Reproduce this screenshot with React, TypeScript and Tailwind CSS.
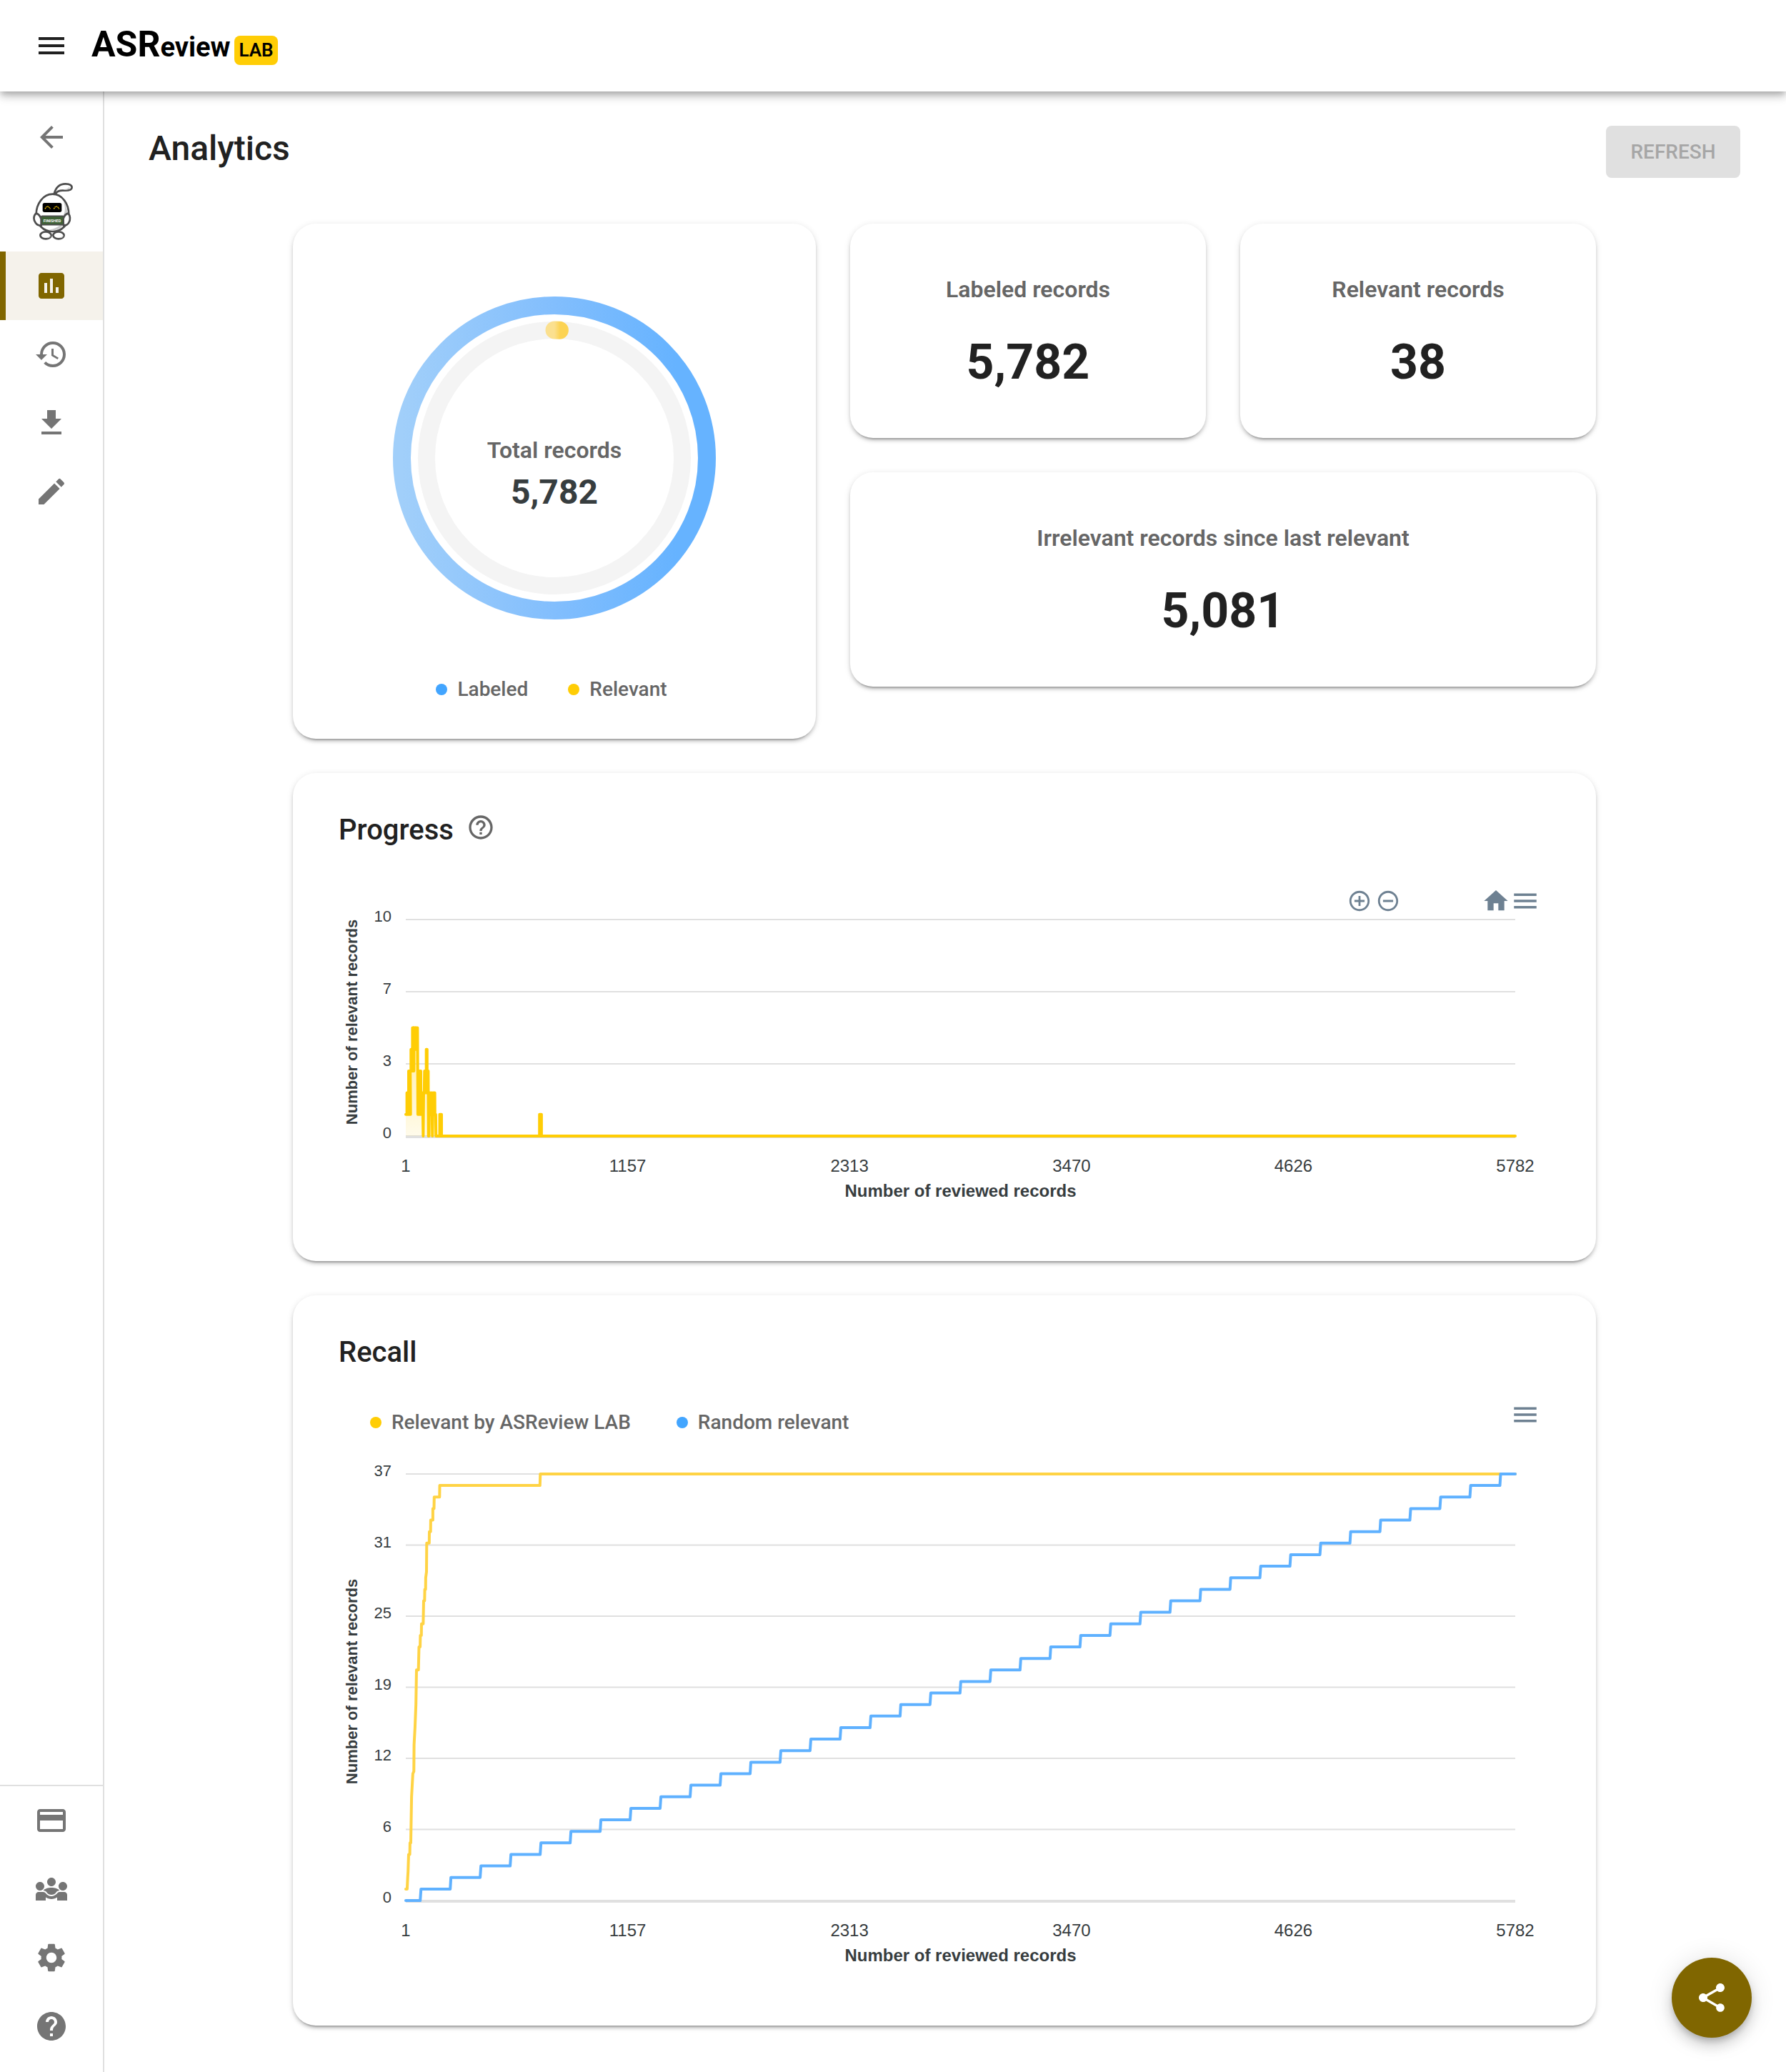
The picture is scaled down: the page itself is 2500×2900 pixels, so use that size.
import React from "react";
import {
  MdAddCircleOutline,
  MdArrowBack,
  MdAssessment,
  MdEdit,
  MdGetApp,
  MdHelp,
  MdHelpOutline,
  MdHistory,
  MdHome,
  MdMenu,
  MdPayment,
  MdRemoveCircleOutline,
  MdSettings,
  MdShare,
} from "react-icons/md";

type Point = [number, number];

const TOTAL_RECORDS = 5782;
const PLOT_LEFT = 94;
const PLOT_RIGHT = 1647;
const X_TICKS = [1, 1157, 2313, 3470, 4626, 5782];

const recordX = (n: number) =>
  PLOT_LEFT + ((n - 1) * (PLOT_RIGHT - PLOT_LEFT)) / (TOTAL_RECORDS - 1);

const toPath = (points: Point[], top: number, bottom: number, max: number) =>
  points
    .map(([n, v], i) => {
      const y = bottom - (v * (bottom - top)) / max;
      return `${i === 0 ? "M" : "L"}${recordX(n).toFixed(1)} ${y.toFixed(1)}`;
    })
    .join("");

const progressPoints: Point[] = [
  [1, 1], [7, 1], [7, 2], [11, 2], [11, 1], [16, 1], [16, 3], [20, 3], [20, 1], [26, 1],
  [24, 3], [28, 3], [28, 4], [31, 3], [36, 3], [36, 5], [41, 5], [41, 3], [43, 3], [43, 5],
  [50, 5], [51, 4], [53, 4], [54, 5], [62, 5], [63, 3], [64, 1], [68, 1], [67, 3], [73, 3],
  [73, 1], [77, 1], [77, 3], [79, 3], [80, 1], [85, 1], [85, 2], [88, 2], [90, 1], [92, 0],
  [94, 2], [97, 2], [99, 3], [102, 3], [102, 2], [108, 2], [108, 4], [112, 4], [112, 2],
  [116, 2], [116, 3], [118, 3], [119, 0], [122, 0], [124, 2], [128, 2], [128, 1], [133, 1],
  [133, 2], [137, 2], [138, 1], [140, 0], [144, 2], [146, 1], [150, 1], [150, 2], [152, 2],
  [153, 1], [157, 1], [158, 0], [178, 0], [178, 1], [187, 1], [187, 0], [698, 0], [698, 1],
  [708, 1], [708, 0], [5782, 0],
];

const recallPoints: Point[] = [
  [1, 1], [8, 1], [11, 2], [13, 2.5], [16, 4], [22, 4], [23, 5], [27, 5], [31, 9], [38, 11],
  [43, 11.2], [44, 13.5], [49, 15], [54, 17], [57, 20], [67, 20], [70, 22], [76, 22],
  [77, 23], [82, 23], [83, 24], [92, 24], [94, 26], [99, 26], [100, 27], [104, 27],
  [105, 28], [109, 28.5], [110, 31], [123, 31], [124, 32], [130, 32], [131, 33], [142, 33],
  [142, 34], [148, 34], [149, 35], [177, 35], [178, 36], [700, 36], [702, 37], [5782, 37],
];

const randomPoints: Point[] = [[1, 0]];
for (let k = 0; k < 37; k++) {
  const n = (TOTAL_RECORDS / 37) * (k + 0.5);
  randomPoints.push([n - 2, k], [n + 2, k + 1]);
}
randomPoints.push([TOTAL_RECORDS, 37]);

function Card({ className, children }: { className: string; children: React.ReactNode }) {
  return (
    <section
      className={`rounded-[32px] bg-white shadow-[0_6px_2px_-4px_rgba(0,0,0,0.2),0_4px_4px_0_rgba(0,0,0,0.14),0_2px_10px_0_rgba(0,0,0,0.12)] ${className}`}
    >
      {children}
    </section>
  );
}

function Stat({ label, value, className }: { label: string; value: string; className: string }) {
  return (
    <Card className={`flex flex-col items-center gap-[38px] pt-[68px] pb-[66px] ${className}`}>
      <h2 className="text-[32px] leading-[48px] font-semibold text-[#666666]">{label}</h2>
      <p className="text-[68px] leading-[80px] font-bold">{value}</p>
    </Card>
  );
}

function Legend({ items, className }: { items: { label: string; dot: string }[]; className: string }) {
  return (
    <ul className={`flex ${className}`}>
      {items.map((item) => (
        <li key={item.label} className="flex items-center gap-3.5">
          <span className={`size-4 rounded-full ${item.dot}`} />
          <span className="text-[28px] leading-8 font-medium text-[#666666]">{item.label}</span>
        </li>
      ))}
    </ul>
  );
}

function ChartFrame({
  top,
  bottom,
  height,
  labels,
  children,
}: {
  top: number;
  bottom: number;
  height: number;
  labels: string[];
  children: React.ReactNode;
}) {
  const step = (bottom - top) / (labels.length - 1);
  const middle = (top + bottom) / 2;
  return (
    <svg
      viewBox={`0 0 1696 ${height}`}
      className="block w-full overflow-visible font-['Liberation_Sans',Arial,sans-serif]"
    >
      {labels.map((label, i) => (
        <g key={label}>
          <line
            x1={PLOT_LEFT}
            x2={PLOT_RIGHT}
            y1={top + i * step}
            y2={top + i * step}
            stroke="#e0e0e0"
            strokeWidth="2"
          />
          <text x="74" y={top + i * step + 3} textAnchor="end" fontSize="22" fill="#373d3f">
            {label}
          </text>
        </g>
      ))}
      <line x1={PLOT_LEFT} x2={PLOT_RIGHT} y1={bottom + 2} y2={bottom + 2} stroke="#e0e0e0" strokeWidth="2" />
      {children}
      {X_TICKS.map((tick) => (
        <text key={tick} x={recordX(tick)} y={bottom + 50} textAnchor="middle" fontSize="24" fill="#373d3f">
          {tick}
        </text>
      ))}
      <text
        x={(PLOT_LEFT + PLOT_RIGHT) / 2}
        y={bottom + 85}
        textAnchor="middle"
        fontSize="24"
        fontWeight="bold"
        fill="#373d3f"
      >
        Number of reviewed records
      </text>
      <text
        transform={`translate(26 ${middle - 8}) rotate(-90)`}
        textAnchor="middle"
        fontSize="22"
        fontWeight="bold"
        fill="#373d3f"
      >
        Number of relevant records
      </text>
    </svg>
  );
}

function Mascot() {
  return (
    <svg viewBox="135 768 168 240" className="h-20 w-14" aria-hidden="true">
      <g stroke="#4d4d4d" strokeWidth="8" strokeLinejoin="round">
        <path d="M224 814C232 784 250 772 272 772C290 772 299 779 299 788C298 799 284 801 264 800C246 799 236 803 230 814" fill="#fff" />
        <path d="M286 786c-4 8-16 9-26 10c14 2 30 0 30-8z" fill="#ccc" stroke="none" />
        <path d="M218 815C258 815 286 856 286 900C286 944 256 972 218 972C180 972 149 944 149 900C149 856 178 815 218 815Z" fill="#fff" />
        <path d="M262 842C280 866 284 898 280 922L262 905C274 886 270 860 262 842Z" fill="#ccc" stroke="none" />
        <path d="M262 944C248 964 226 970 200 966C228 960 244 950 250 944Z" fill="#ccc" stroke="none" />
        <path d="M149 896C138 904 136 922 146 935C152 944 160 947 170 947L170 920C166 908 158 898 149 896Z" fill="#fff" />
        <path d="M283 896C292 904 294 922 286 935C281 944 274 947 264 947L262 920C266 908 274 898 283 896Z" fill="#fff" />
        <ellipse cx="189" cy="988" rx="23" ry="15" fill="#fff" />
        <ellipse cx="243" cy="988" rx="23" ry="15" fill="#fff" />
      </g>
      <path d="M194 1000c10 0 16-6 16-14l-6 8zM248 1000c10 0 16-6 16-14l-6 8z" fill="#ccc" />
      <rect x="176" y="852" width="80" height="39" rx="8" fill="#000" />
      <path d="M186 877q11-20 22 0M223 877q11-20 22 0" fill="none" stroke="#ffcd05" strokeWidth="4" strokeDasharray="5 2" />
      <rect x="170" y="907" width="94" height="37" rx="4" fill="#3f6136" stroke="#4d4d4d" strokeWidth="5" />
      <text x="216" y="932" textAnchor="middle" fontSize="17" fontWeight="bold" fill="#fff" className="font-['Roboto',sans-serif]">
        FINISHED
      </text>
    </svg>
  );
}

function TeamIcon() {
  return (
    <svg viewBox="0 0 24 24" fill="currentColor" className="size-12">
      <path d="M6.32 13.01c.96.02 1.85.5 2.45 1.34C9.5 15.38 10.71 16 12 16s2.5-.62 3.23-1.66c.6-.84 1.49-1.32 2.45-1.34C16.96 11.78 14.08 11 12 11c-2.07 0-4.96.78-5.68 2.01zM4 13c1.66 0 3-1.34 3-3S5.66 7 4 7s-3 1.34-3 3 1.34 3 3 3zM20 13c1.66 0 3-1.34 3-3s-1.34-3-3-3-3 1.34-3 3 1.34 3 3 3zM12 10c1.66 0 3-1.34 3-3s-1.34-3-3-3-3 1.34-3 3 1.34 3 3 3z" />
      <path d="M21 14h-3.27c-.77 0-1.35.45-1.68.92-.04.06-1.36 2.08-4.05 2.08-1.43 0-3.03-.64-4.05-2.08C7.56 14.37 6.95 14 6.27 14H3c-1.1 0-2 .9-2 2v4h7v-2.26c1.15.8 2.54 1.26 4 1.26s2.85-.46 4-1.26V20h7v-4c0-1.1-.9-2-2-2z" />
    </svg>
  );
}

function NavItem({ label, active, children }: { label: string; active?: boolean; children: React.ReactNode }) {
  return (
    <a
      href="#"
      aria-label={label}
      aria-current={active ? "page" : undefined}
      className={
        active
          ? "flex h-24 items-center justify-center border-l-8 border-[#806600] bg-[#f5f2eb] pr-2 text-[#806600]"
          : "flex h-24 items-center justify-center text-[#757575]"
      }
    >
      {children}
    </a>
  );
}

function RadialChart() {
  return (
    <svg viewBox="0 0 452 452" className="block w-[452px] max-w-full">
      <defs>
        <linearGradient id="labeled">
          <stop offset="0" stopColor="#a1cffa" />
          <stop offset="0.5" stopColor="#82befd" />
          <stop offset="0.9" stopColor="#66b3ff" />
        </linearGradient>
        <linearGradient id="relevant" gradientUnits="userSpaceOnUse" x1="226" y1="0" x2="234" y2="0">
          <stop offset="0" stopColor="#fbe08f" />
          <stop offset="1" stopColor="#fcd353" />
        </linearGradient>
      </defs>
      <circle cx="226" cy="226" r="213.5" fill="none" stroke="url(#labeled)" strokeWidth="25" />
      <circle cx="226" cy="226" r="179" fill="none" stroke="#f4f4f4" strokeWidth="24" />
      <path d="M226 47A179 179 0 0 1 233.400 47.200" fill="none" stroke="url(#relevant)" strokeWidth="25" strokeLinecap="round" />
      <text x="226" y="226" textAnchor="middle" fontSize="32" className="font-semibold" fill="#666666">
        Total records
      </text>
      <text x="226" y="290" textAnchor="middle" fontSize="48" fontWeight="bold" fill="#373d3f">
        5,782
      </text>
    </svg>
  );
}

export default function App() {
  return (
    <div className="flex min-h-screen flex-col bg-white font-['Roboto',sans-serif] text-[#212121]">
      <header className="z-10 flex h-32 items-center bg-white pl-12 shadow-[0_4px_8px_-2px_rgba(0,0,0,0.2),0_8px_10px_0_rgba(0,0,0,0.14),0_2px_20px_0_rgba(0,0,0,0.12)]">
        <button type="button" aria-label="Menu">
          <MdMenu className="size-12" />
        </button>
        <a href="#" className="ml-8 flex items-baseline text-black">
          <span className="text-[50px] leading-[56px] font-bold">ASR</span>
          <span className="text-[38px] leading-[56px] font-bold">eview</span>
          <span className="ml-1.5 rounded-lg bg-[#ffcd05] px-1.5 text-[26px] leading-[41px] font-semibold">LAB</span>
        </a>
      </header>

      <div className="flex grow">
        <aside className="flex w-36 shrink-0 flex-col justify-between py-4 shadow-[2px_0_0_#e0e0e0]">
          <nav aria-label="Project">
            <NavItem label="Back">
              <MdArrowBack className="size-12" />
            </NavItem>
            <div className="flex h-28 items-center justify-center pl-1">
              <Mascot />
            </div>
            <NavItem label="Analytics" active>
              <MdAssessment className="size-12" />
            </NavItem>
            <NavItem label="History">
              <MdHistory className="size-12" />
            </NavItem>
            <NavItem label="Export">
              <MdGetApp className="size-12" />
            </NavItem>
            <NavItem label="Details">
              <MdEdit className="size-12" />
            </NavItem>
          </nav>
          <nav aria-label="General" className="border-t-2 border-[#e0e0e0]">
            <NavItem label="Donate">
              <MdPayment className="size-12" />
            </NavItem>
            <NavItem label="Community">
              <TeamIcon />
            </NavItem>
            <NavItem label="Settings">
              <MdSettings className="size-12" />
            </NavItem>
            <NavItem label="Help">
              <MdHelp className="size-12" />
            </NavItem>
          </nav>
        </aside>

        <main className="min-w-0 grow px-16 pt-12 pb-16">
          <div className="flex items-start justify-between">
            <h1 className="text-[48px] leading-[64px] font-medium">Analytics</h1>
            <button
              type="button"
              disabled
              className="min-w-[188px] rounded-lg bg-[#e0e0e0] px-8 py-3 text-[28px] leading-[49px] font-medium text-[#a6a6a6]"
            >
              REFRESH
            </button>
          </div>

          <div className="mx-auto mt-16 grid max-w-[1824px] grid-cols-12 gap-12">
            <Card className="col-span-5 flex flex-col items-center pt-[102px] pb-[53px]">
              <RadialChart />
              <Legend
                className="mt-[82px] gap-14 pr-2"
                items={[
                  { label: "Labeled", dot: "bg-[#42a5ff]" },
                  { label: "Relevant", dot: "bg-[#ffcd05]" },
                ]}
              />
            </Card>

            <div className="col-span-7 grid grid-cols-2 content-start gap-12">
              <Stat className="col-span-1" label="Labeled records" value="5,782" />
              <Stat className="col-span-1" label="Relevant records" value="38" />
              <Stat className="col-span-2" label="Irrelevant records since last relevant" value="5,081" />
            </div>

            <Card className="col-span-12 px-16 pt-14 pb-16">
              <div className="flex h-12 items-start gap-[18px]">
                <h2 className="text-[40px] leading-[48px] font-medium">Progress</h2>
                <button type="button" aria-label="About this chart" className="text-[#666666]">
                  <MdHelpOutline className="size-10" />
                </button>
              </div>
              <div className="mt-[54px] flex h-[42px] items-center justify-end pr-3.5 text-[#6e8192]">
                <button type="button" aria-label="Zoom in">
                  <MdAddCircleOutline className="size-[34px]" />
                </button>
                <button type="button" aria-label="Zoom out" className="ml-1.5">
                  <MdRemoveCircleOutline className="size-[34px]" />
                </button>
                <button type="button" aria-label="Reset zoom" className="ml-[114px]">
                  <MdHome className="size-10" />
                </button>
                <button type="button" aria-label="Chart menu">
                  <MdMenu className="size-[42px]" />
                </button>
              </div>
              <ChartFrame top={5} bottom={308} height={419} labels={["10", "7", "3", "0"]}>
                <defs>
                  <linearGradient id="progress-area" x1="0" y1="0" x2="0" y2="1">
                    <stop offset="0" stopColor="#ffcd05" stopOpacity="0.4" />
                    <stop offset="1" stopColor="#ffcd05" stopOpacity="0.08" />
                  </linearGradient>
                </defs>
                <path d={`${toPath(progressPoints, 5, 308, 10)}L${PLOT_LEFT} 308Z`} fill="url(#progress-area)" />
                <path
                  d={toPath(progressPoints, 5, 308, 10)}
                  fill="none"
                  stroke="#ffcd05"
                  strokeWidth="4"
                  strokeLinecap="round"
                  strokeLinejoin="round"
                />
              </ChartFrame>
            </Card>

            <Card className="col-span-12 px-16 pt-14 pb-16">
              <h2 className="text-[40px] leading-[48px] font-medium">Recall</h2>
              <div className="mt-[42px] flex h-10 items-start justify-between pr-3.5 pl-11">
                <Legend
                  className="gap-16 pt-4"
                  items={[
                    { label: "Relevant by ASReview LAB", dot: "bg-[#ffcd05]" },
                    { label: "Random relevant", dot: "bg-[#42a5ff]" },
                  ]}
                />
                <button type="button" aria-label="Chart menu" className="text-[#6e8192]">
                  <MdMenu className="size-[42px]" />
                </button>
              </div>
              <ChartFrame top={64} bottom={661} height={772} labels={["37", "31", "25", "19", "12", "6", "0"]}>
                <g fill="none" strokeWidth="4" strokeLinecap="round" strokeLinejoin="round">
                  <path d={toPath(recallPoints, 64, 661, 37)} stroke="#ffd344" />
                  <path d={toPath(randomPoints, 64, 661, 37)} stroke="#5fb1ff" />
                </g>
              </ChartFrame>
            </Card>
          </div>
        </main>
      </div>

      <button
        type="button"
        aria-label="Share"
        className="fixed right-12 bottom-12 flex size-28 items-center justify-center rounded-full bg-[#806600] text-white shadow-[0_6px_10px_-2px_rgba(0,0,0,0.2),0_12px_20px_0_rgba(0,0,0,0.14),0_2px_36px_0_rgba(0,0,0,0.12)]"
      >
        <MdShare className="size-12" />
      </button>
    </div>
  );
}
